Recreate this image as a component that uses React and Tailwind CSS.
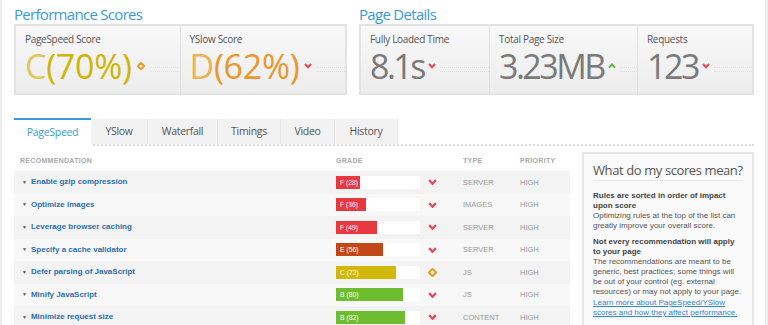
import React from "react";

const scores = [
  { label: "PageSpeed Score", grade: "C", pct: "(70%)", gradeCls: "text-[#e0c95c]", pctCls: "text-[#d2b406]", icon: "diamond" },
  { label: "YSlow Score", grade: "D", pct: "(62%)", gradeCls: "text-[#ecb257]", pctCls: "text-[#e8982c]", icon: "down" },
];

const details = [
  { label: "Fully Loaded Time", value: "8.1s", icon: "down", w: "w-[129px]" },
  { label: "Total Page Size", value: "3.23MB", icon: "up", w: "w-[148px]" },
  { label: "Requests", value: "123", icon: "down", w: "flex-1" },
];

const tabs = [
  { name: "PageSpeed", w: "w-[77px]" },
  { name: "YSlow", w: "w-[57px]" },
  { name: "Waterfall", w: "w-[70px]" },
  { name: "Timings", w: "w-[63px]" },
  { name: "Video", w: "w-[54px]" },
  { name: "History", w: "w-[63px]" },
];

const rows = [
  { name: "Enable gzip compression", grade: "F (28)", pct: 28, color: "bg-[#e8393f]", icon: "down", type: "SERVER" },
  { name: "Optimize images", grade: "F (36)", pct: 36, color: "bg-[#e8393f]", icon: "down", type: "IMAGES" },
  { name: "Leverage browser caching", grade: "F (49)", pct: 49, color: "bg-[#e8393f]", icon: "down", type: "SERVER" },
  { name: "Specify a cache validator", grade: "E (56)", pct: 56, color: "bg-[#c2481a]", icon: "down", type: "SERVER" },
  { name: "Defer parsing of JavaScript", grade: "C (72)", pct: 72, color: "bg-[#d3b80c]", icon: "diamond", type: "JS" },
  { name: "Minify JavaScript", grade: "B (80)", pct: 80, color: "bg-[#6dbd2e]", icon: "down", type: "JS" },
  { name: "Minimize request size", grade: "B (82)", pct: 82, color: "bg-[#6dbd2e]", icon: "down", type: "CONTENT" },
];

function Trend({ kind, size = 8 }) {
  if (kind === "diamond") {
    return (
      <svg width={size} height={size} viewBox="0 0 8 8" className="shrink-0">
        <path d="M4 0.8 L7.2 4 L4 7.2 L0.8 4 Z" fill="none" stroke="#e89a1c" strokeWidth="1.8" />
      </svg>
    );
  }
  if (kind === "up") {
    return (
      <svg width={size} height={size * 0.7} viewBox="0 0 8 5.6" className="shrink-0">
        <path d="M1 4.6 L4 1.4 L7 4.6" fill="none" stroke="#5aaf3c" strokeWidth="2" />
      </svg>
    );
  }
  return (
    <svg width={size} height={size * 0.7} viewBox="0 0 8 5.6" className="shrink-0">
      <path d="M1 1 L4 4.2 L7 1" fill="none" stroke="#e8475c" strokeWidth="2" />
    </svg>
  );
}

function App() {
  return (
    <div className="w-[768px] h-[325px] overflow-hidden bg-white flex font-['Open_Sans',sans-serif]">
      <div className="w-[2px] bg-[#ececec] shrink-0" />
      <div className="flex-1 pl-[12px] pr-[11px]">
        {/* Top score boxes */}
        <div className="flex gap-[12px] pt-[4px]">
          <div className="w-[333px]">
            <h2 className="text-[15px] leading-[20px] text-[#3b9ad9] tracking-[-0.7px]">Performance Scores</h2>
            <div className="h-[71px] border-2 border-[#e3e3e3] bg-gradient-to-b from-[#f8f8f8] to-[#ededed] flex">
              {scores.map((s, i) => (
                <div key={s.label} className={`w-1/2 pl-[9px] pt-[7px] ${i === 0 ? "border-r border-[#e0e0e0]" : ""}`}>
                  <div className="text-[10px] leading-[13px] text-[#555] tracking-[-0.3px]">{s.label}</div>
                  <div className="flex items-center gap-[5px] h-[36px] mt-[2px]">
                    <span className="text-[34px] leading-[34px] tracking-[-0.3px]">
                      <span className={s.gradeCls}>{s.grade}</span>
                      <span className={s.pctCls}>{s.pct}</span>
                    </span>
                    <Trend kind={s.icon} />
                    <div className="flex-1 h-[5px] mt-[6px] border-y border-dotted border-[#e2e2e2]" />
                  </div>
                </div>
              ))}
            </div>
          </div>
          <div className="flex-1">
            <h2 className="text-[15px] leading-[20px] text-[#3b9ad9] tracking-[-0.7px]">Page Details</h2>
            <div className="h-[71px] border-2 border-[#e3e3e3] bg-gradient-to-b from-[#f8f8f8] to-[#ededed] flex">
              {details.map((d, i) => (
                <div key={d.label} className={`${d.w} pl-[9px] pt-[7px] ${i < 2 ? "border-r border-[#e0e0e0]" : ""}`}>
                  <div className="text-[10px] leading-[13px] text-[#555] tracking-[-0.3px]">{d.label}</div>
                  <div className="flex items-center gap-[4px] h-[36px] mt-[2px]">
                    <span className="text-[34px] leading-[34px] tracking-[-2.5px] text-[#7a7a7a]">{d.value}</span>
                    <Trend kind={d.icon} />
                    <div className="flex-1 h-[5px] mt-[6px] border-y border-dotted border-[#e2e2e2]" />
                  </div>
                </div>
              ))}
            </div>
          </div>
        </div>

        {/* Tabs */}
        <div className="mt-[23px] flex border-b-2 border-dotted border-[#dcdcdc] h-[28px]">
          {tabs.map((t, i) =>
            i === 0 ? (
              <div key={t.name} className={`${t.w} border-t-2 border-[#3b9ad9] bg-white -mb-[2px] flex items-center justify-center text-[10.5px] text-[#3b9ad9] tracking-[-0.3px]`}>
                {t.name}
              </div>
            ) : (
              <div key={t.name} className={`${t.w} mt-[1px] bg-[#f2f2f2] border-r border-[#e6e6e6] flex items-center justify-center text-[10.5px] text-[#555] tracking-[-0.3px]`}>
                {t.name}
              </div>
            )
          )}
        </div>

        {/* Table + sidebar */}
        <div className="flex gap-[12px] mt-[6px]">
          <div className="w-[556px] font-['Liberation_Sans',Arial,sans-serif]">
            <div className="h-[19px] flex items-center text-[7px] font-bold text-[#aaa] tracking-[0.3px]">
              <div className="w-[322px] pl-[6px]">RECOMMENDATION</div>
              <div className="w-[127px]">GRADE</div>
              <div className="w-[57px]">TYPE</div>
              <div>PRIORITY</div>
            </div>
            {rows.map((r, i) => (
              <div key={r.name} className={`h-[22.5px] flex items-center ${i % 2 === 0 ? "bg-[#f3f3f3]" : "bg-[#f8f8f8]"}`}>
                <div className="w-[322px] pl-[8px] flex items-center gap-[4px] text-[8px] font-bold text-[#2b6fae]">
                  <span className="text-[5px] text-[#555]">▼</span>
                  {r.name}
                </div>
                <div className="w-[92px] h-[13px]">
                  <div className="w-[84px] h-[13px] bg-white">
                    <div className={`h-full ${r.color} text-white text-[6.8px] leading-[13px] pl-[4px] whitespace-nowrap`} style={{ width: `${(84 * r.pct) / 100}px` }}>
                      {r.grade}
                    </div>
                  </div>
                </div>
                <div className="w-[35px]">
                  <Trend kind={r.icon} size={9} />
                </div>
                <div className="w-[57px] text-[7.5px] text-[#999]">{r.type}</div>
                <div className="text-[7.5px] text-[#999]">HIGH</div>
              </div>
            ))}
          </div>

          <div className="flex-1 border-2 border-[#e6e6e6] bg-[#fafafa] px-[9px] pt-[6px] h-[180px]">
            <div className="text-[13px] leading-[20px] text-[#555] tracking-[-0.4px] whitespace-nowrap border-b border-[#e8e8e8]">What do my scores mean?</div>
            <div className="font-['Liberation_Sans',Arial,sans-serif] text-[8px] leading-[10px] text-[#555] mt-[10px] whitespace-nowrap">
              <div className="font-bold text-[#444]">Rules are sorted in order of impact<br />upon score</div>
              <div>Optimizing rules at the top of the list can<br />greatly improve your overall score.</div>
              <div className="font-bold text-[#444] mt-[6px]">Not every recommendation will apply<br />to your page</div>
              <div>The recommendations are meant to be<br />generic, best practices; some things will<br />be out of your control (eg. external<br />resources) or may not apply to your page.</div>
              <div className="mt-[1px] text-[#2f86d4] underline">Learn more about PageSpeed/YSlow<br />scores and how they affect performance.</div>
            </div>
          </div>
        </div>
      </div>
      <div className="w-[5px] bg-[#efefef] shrink-0" />
    </div>
  );
}

export default App;
